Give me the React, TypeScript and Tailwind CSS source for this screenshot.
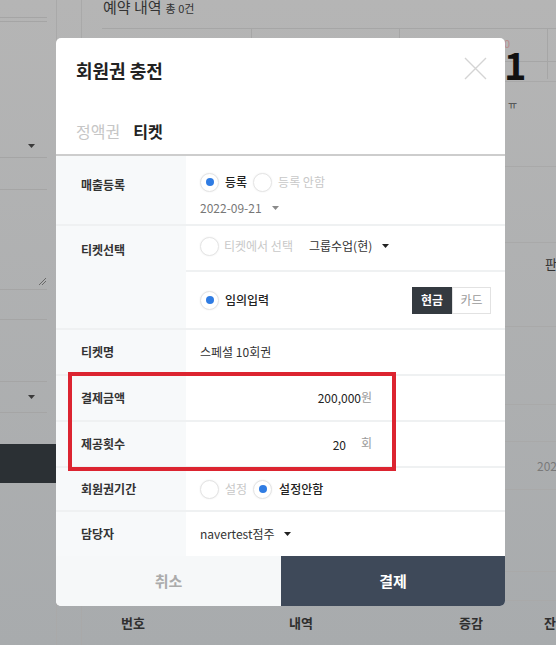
import React from "react";

function Radio({ checked }: { checked?: boolean }) {
  return (
    <span className="flex h-[19px] w-[19px] shrink-0 items-center justify-center rounded-full border border-[#e4e4e4] bg-white shadow-[0_0_2px_rgba(0,0,0,0.08)]">
      {checked && <span className="h-[8px] w-[8px] rounded-full bg-[#2f7ce3]" />}
    </span>
  );
}

function Caret({ color = "#222" }: { color?: string }) {
  return (
    <svg width="7" height="4" viewBox="0 0 7 4" className="shrink-0">
      <path d="M0 0h7L3.5 4z" fill={color} />
    </svg>
  );
}

function Label({ children }: { children: React.ReactNode }) {
  return <span className="text-[12px] font-bold leading-[16px] text-[#333]">{children}</span>;
}

export default function App() {
  return (
    <div className="relative h-[645px] w-[556px] overflow-hidden bg-linear-to-b from-[#b5b5b5] to-[#a8abad] font-['Noto_Sans_CJK_KR','Noto_Sans',sans-serif]">
      {/* page behind the dialog */}
      <div className="flex h-full">
        <div className="flex w-[57px] shrink-0 flex-col border-r border-[#a9a9a9]">
          <div className="mr-[9px] h-[18px] border-b border-[#a5a5a5]" />
          <div className="mr-[9px] h-[4px] border-b border-[#a5a5a5]" />
          <div className="mr-[9px] flex h-[136px] items-end border-b border-[#a5a5a5] pb-[9px] pl-[28px]">
            <Caret color="#3a3a3a" />
          </div>
          <div className="mr-[9px] h-[32px] border-b border-[#a5a5a5]" />
          <div className="mr-[9px] flex h-[100px] items-end justify-end border-b border-[#a5a5a5] pb-[3px]">
            <svg width="9" height="9" viewBox="0 0 9 9">
              <path d="M1 8L8 1M4 8L8 4" stroke="#555" strokeWidth="0.8" />
            </svg>
          </div>
          <div className="mr-[9px] h-[30px] border-b border-[#a5a5a5]" />
          <div className="mr-[9px] h-[62px] border-b border-[#a5a5a5]" />
          <div className="mr-[9px] flex h-[31px] items-center border-b border-[#a5a5a5] pl-[28px]">
            <Caret color="#3a3a3a" />
          </div>
          <div className="h-[31px]" />
          <div className="h-[39px] bg-[#2b3034]" />
        </div>
        <div className="w-[24px] shrink-0" />
        <div className="flex flex-1 flex-col border-l border-[#a9a9a9]">
          <div className="flex h-[28px] items-start gap-[4px] pl-[21px] text-[#333]">
            <span className="-mt-[2px] text-[15px] leading-[18px]">예약 내역</span>
            <span className="text-[11px] leading-[16px]">총 0건</span>
          </div>
          <div className="ml-[20px] grid h-[34px] grid-cols-[150px_148px_148px_1fr] border-y border-[#a6a6a6]">
            <div className="border-r border-[#a6a6a6]" />
            <div className="border-r border-[#a6a6a6]" />
            <div className="relative border-r border-[#a6a6a6]">
              <div className="flex flex-col pl-[104px] pt-[9px]">
                <span className="text-[11px] leading-[11px] text-[#b98b8b]">0</span>
                <span className="text-[38px] font-bold leading-[30px] text-[#111]">1</span>
              </div>
            </div>
            <div />
          </div>
          <div className="h-[20px] border-b border-[#a9a9a9]" />
          <div className="h-[85px] border-b border-[#a9a9a9] pl-[426px] pt-[17px] text-[10px] leading-[12px] text-[#444]">ㅠ</div>
          <div className="h-[76px] border-b border-[#a9a9a9]" />
          <div className="h-[84px] whitespace-nowrap border-b border-[#a9a9a9] pl-[463px] pt-[13px] text-[13px] leading-[16px] text-[#333]">판매</div>
          <div className="h-[78px] border-b border-[#a9a9a9]" />
          <div className="h-[37px] border-b border-[#a9a9a9]" />
          <div className="h-[48px] whitespace-nowrap border-b border-[#a9a9a9] pl-[455px] pt-[17px] text-[12px] leading-[14px] text-[#7a7a7a]">2022</div>
          <div className="h-[82px] border-b border-[#a9a9a9]" />
          <div className="h-[29px] border-b border-[#a9a9a9]" />
          <div className="flex h-[44px] items-center whitespace-nowrap text-[13px] font-bold text-[#2f2f2f]">
            <span className="ml-[39px] w-[168px] shrink-0">번호</span>
            <span className="w-[170px] shrink-0">내역</span>
            <span className="w-[85px] shrink-0">증감</span>
            <span className="shrink-0">잔액</span>
          </div>
        </div>
      </div>

      {/* dialog */}
      <div className="absolute left-[56px] top-[38px] w-[449px] overflow-hidden rounded-[5px] bg-white">
        <div className="flex h-[118px] flex-col border-b-2 border-[#cdcdcd] px-[20px]">
          <div className="mt-[20px] flex h-[24px] items-center justify-between">
            <span className="text-[18px] font-bold leading-[24px] text-[#222]">회원권 충전</span>
            <svg width="23" height="23" viewBox="0 0 23 23" className="-mr-[2px] -mt-[3px]">
              <path d="M1 1L22 22M22 1L1 22" stroke="#d4d4d4" strokeWidth="1.4" />
            </svg>
          </div>
          <div className="mt-[38px] flex h-[22px] items-center gap-[13px] text-[16px] leading-[22px]">
            <span className="text-[#c6c6c6]">정액권</span>
            <span className="font-bold text-[#222]">티켓</span>
          </div>
        </div>

        {/* 매출등록 */}
        <div className="flex h-[68px]">
          <div className="w-[130px] shrink-0 bg-[#f7f9fa] pl-[25px] pt-[15px]">
            <Label>매출등록</Label>
          </div>
          <div className="flex flex-col pl-[14px] pt-[16px]">
            <div className="flex h-[20px] items-center text-[12px]">
              <Radio checked />
              <span className="ml-[6px] font-medium text-[#222]">등록</span>
              <span className="ml-[6px]"><Radio /></span>
              <span className="ml-[6px] text-[#c8c8c8]">등록 안함</span>
            </div>
            <div className="mt-[9px] flex h-[14px] items-center gap-[10px] text-[12px] text-[#777]">
              <span>2022-09-21</span>
              <Caret color="#8a8a8a" />
            </div>
          </div>
        </div>

        {/* 티켓선택 */}
        <div className="flex border-t-2 border-[#eff1f2]">
          <div className="w-[130px] shrink-0 bg-[#f7f9fa] pl-[25px] pt-[10px]">
            <Label>티켓선택</Label>
          </div>
          <div className="flex flex-1 flex-col">
            <div className="flex h-[44px] items-center pb-[4px] pl-[14px] text-[12px]">
              <Radio />
              <span className="ml-[5px] text-[#c8c8c8]">티켓에서 선택</span>
              <span className="ml-[16px] text-[#333]">그룹수업(현)</span>
              <span className="ml-[10px]"><Caret /></span>
            </div>
            <div className="flex h-[58px] items-center justify-between border-t-2 border-[#eff1f2] pl-[14px] pr-[14px]">
              <div className="flex items-center text-[12px]">
                <Radio checked />
                <span className="ml-[6px] font-medium text-[#222]">임의입력</span>
              </div>
              <div className="flex h-[27px] text-[12px]">
                <span className="flex w-[40px] items-center justify-center bg-[#343a40] font-bold text-white">현금</span>
                <span className="flex w-[39px] items-center justify-center border border-[#e2e2e2] text-[#9a9a9a]">카드</span>
              </div>
            </div>
          </div>
        </div>

        {/* 티켓명 */}
        <div className="flex h-[46px] border-t-2 border-[#eff1f2]">
          <div className="flex w-[130px] shrink-0 items-center bg-[#f7f9fa] pl-[25px]">
            <Label>티켓명</Label>
          </div>
          <div className="flex items-center pl-[14px] text-[12px] text-[#333]">스페셜 10회권</div>
        </div>

        {/* 결제금액 */}
        <div className="flex h-[46px] border-t-2 border-[#eff1f2]">
          <div className="flex w-[130px] shrink-0 items-center bg-[#f7f9fa] pl-[25px]">
            <Label>결제금액</Label>
          </div>
          <div className="ml-[14px] flex w-[172px] items-center justify-end text-[12px]">
            <span className="text-[#222]">200,000</span>
            <span className="-mt-[2px] text-[#9a9a9a]">원</span>
          </div>
        </div>

        {/* 제공횟수 */}
        <div className="flex h-[46px] border-t-2 border-[#eff1f2]">
          <div className="flex w-[130px] shrink-0 items-center bg-[#f7f9fa] pl-[25px]">
            <Label>제공횟수</Label>
          </div>
          <div className="ml-[14px] flex w-[172px] items-center justify-end text-[12px]">
            <span className="mt-[2px] text-[#222]">20</span>
            <span className="-mt-[2px] ml-[15px] text-[#9a9a9a]">회</span>
          </div>
        </div>

        {/* 회원권기간 */}
        <div className="flex h-[44px] border-t-2 border-[#eff1f2]">
          <div className="flex w-[130px] shrink-0 items-center bg-[#f7f9fa] pl-[25px]">
            <Label>회원권기간</Label>
          </div>
          <div className="flex items-center pl-[14px] text-[12px]">
            <Radio />
            <span className="ml-[6px] text-[#c8c8c8]">설정</span>
            <span className="ml-[6px]"><Radio checked /></span>
            <span className="ml-[7px] font-medium text-[#222]">설정안함</span>
          </div>
        </div>

        {/* 담당자 */}
        <div className="flex h-[46px] border-t-2 border-[#eff1f2]">
          <div className="flex w-[130px] shrink-0 items-center bg-[#f7f9fa] pl-[25px]">
            <Label>담당자</Label>
          </div>
          <div className="flex items-center gap-[9px] pl-[14px] text-[12px] text-[#333]">
            <span>navertest점주</span>
            <Caret />
          </div>
        </div>

        <div className="flex h-[50px]">
          <button className="flex w-[225px] items-center justify-center bg-[#f6f8f9] text-[15px] font-bold text-[#ababab]">취소</button>
          <button className="flex flex-1 items-center justify-center bg-[#3e4959] text-[15px] font-bold text-white">결제</button>
        </div>

        {/* highlight box */}
        <div className="pointer-events-none absolute left-[12px] top-[334px] h-[99px] w-[328px] border-[4px] border-[#dc2430]" />
      </div>
    </div>
  );
}
